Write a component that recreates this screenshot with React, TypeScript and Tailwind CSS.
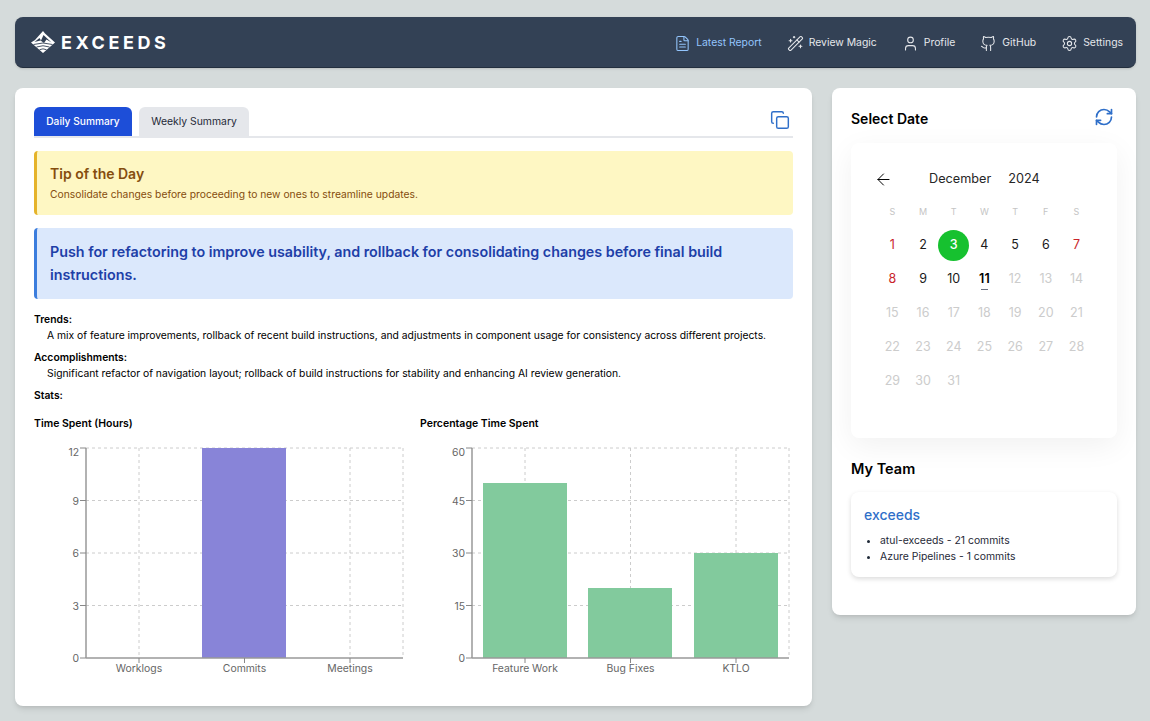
import { ArrowLeft, Copy, FileText, Github, RefreshCw, Settings, User, WandSparkles } from "lucide-react";

const navItems = [
  { label: "Latest Report", icon: FileText, active: true },
  { label: "Review Magic", icon: WandSparkles },
  { label: "Profile", icon: User },
  { label: "GitHub", icon: Github },
  { label: "Settings", icon: Settings },
];

const weekDays = ["S", "M", "T", "W", "T", "F", "S"];
const days = Array.from({ length: 31 }, (_, i) => i + 1);

const Logo = () => (
  <svg width="26" height="24" viewBox="0 0 26 24" fill="none">
    <path d="M13 1 L15 3.5 L25 12.5 L13 23 L1 12.5 L5 10 Z" fill="#fff" />
    <path d="M4.5 12 L9.5 8 L11 10.5 L13.5 5 L21.5 12.5 L16.5 9.5 L14 13 L10.5 10.5 Z" fill="#334155" />
    <path d="M3.5 14.5 Q13 11.5 22.5 14.5 M6.5 17 Q13 14.5 19.5 17 M9.5 19.7 Q13 18 16.5 19.7" stroke="#334155" strokeWidth="0.9" />
  </svg>
);

type Bar = { x: number; value: number };

const Chart = ({ title, ticks, max, labels, bars, color }: {
  title: string;
  ticks: number[];
  max: number;
  labels: { x: number; text: string }[];
  bars: Bar[];
  color: string;
}) => {
  const top = 10;
  const bottom = 220;
  const y = (v: number) => bottom - (v / max) * (bottom - top);
  return (
    <div>
      <h3 className="text-[10.5px] leading-4 font-semibold text-black mb-[6px]">{title}</h3>
      <svg width="376" height="250" className="block" fontSize="10.4" fill="#666">
        {ticks.slice(1).map((t) => (
          <line key={t} x1="52" x2="369" y1={y(t)} y2={y(t)} stroke="#ccc" strokeDasharray="3 3" />
        ))}
        {[105, 210.5, 316, 369].map((x) => (
          <line key={x} x1={x} x2={x} y1={top} y2={bottom} stroke="#ccc" strokeDasharray="3 3" />
        ))}
        {bars.map((b) => (
          <rect key={b.x} x={b.x} y={y(b.value)} width="84" height={bottom - y(b.value)} fill={color} />
        ))}
        <line x1="52" x2="52" y1={top} y2={bottom} stroke="#999" strokeWidth="1.5" />
        <line x1="52" x2="369" y1={bottom} y2={bottom} stroke="#999" strokeWidth="1.5" />
        {ticks.map((t) => (
          <g key={t}>
            <line x1="46" x2="52" y1={y(t)} y2={y(t)} stroke="#888" />
            <text x="45" y={t === max ? y(t) + 8 : y(t) + 4} textAnchor="end">{t}</text>
          </g>
        ))}
        {labels.map((l) => (
          <g key={l.text}>
            <line x1={l.x} x2={l.x} y1={bottom} y2={bottom + 5} stroke="#888" />
            <text x={l.x} y={bottom + 14} textAnchor="middle">{l.text}</text>
          </g>
        ))}
      </svg>
    </div>
  );
};

const DayCell = ({ day }: { day: number }) => {
  if (day === 3) {
    return <div className="w-[31px] h-[31px] rounded-full bg-[#16c12f] text-white font-medium flex items-center justify-center">3</div>;
  }
  if (day === 11) {
    return (
      <div className="relative font-semibold text-black">
        11
        <span className="absolute left-[2px] right-[2px] -bottom-[2px] h-px bg-gray-500" />
      </div>
    );
  }
  let color = "text-[#ccc]";
  if (day < 11) color = "text-[#1a1a1a]";
  if (day === 1 || day === 7 || day === 8) color = "text-[#c9252b]";
  return <div className={color}>{day}</div>;
};

export default function App() {
  return (
    <div className="h-[721px] overflow-hidden bg-[#d5dbdb] pt-[17px] pl-[15px] pr-[14px] font-['Inter',sans-serif]">
      {/* Header */}
      <header className="h-[51px] bg-[#334155] rounded-lg border-b border-[#232f3e] shadow-sm flex items-center justify-between pl-[15px] pr-[13px]">
        <div className="flex items-center gap-[5px]">
          <Logo />
          <span className="text-white text-[18px] font-bold tracking-[0.2em]">EXCEEDS</span>
        </div>
        <nav className="flex items-center gap-[25px] mt-[2px]">
          {navItems.map(({ label, icon: Icon, active }) => (
            <a key={label} className={`flex items-center gap-[5px] text-[10.4px] ${active ? "text-[#93c5fd]" : "text-[#e5e7eb]"}`}>
              <Icon size={17} strokeWidth={1.5} />
              {label}
            </a>
          ))}
        </nav>
      </header>

      <div className="flex items-start gap-[20px] mt-[20px]">
        {/* Report */}
        <main className="w-[797px] h-[618px] bg-white rounded-lg shadow-md pt-[19px] px-[19px]">
          <div className="h-[31px] flex items-end justify-between border-b-2 border-[#e5e7eb] relative">
            <div className="flex gap-[7px] h-[29px]">
              <button className="w-[98px] bg-[#1d4ed8] text-white text-[10.2px] font-medium rounded-t-md">Daily Summary</button>
              <button className="w-[110px] bg-[#e5e7eb] text-[#1f2937] text-[10.4px] rounded-t-md">Weekly Summary</button>
            </div>
            <Copy size={20} strokeWidth={1.75} className="absolute right-[3px] top-[3px] text-[#2f6fc9]" />
          </div>

          <div className="mt-[13px] h-[64px] bg-[#fef7c3] border-l-[3px] border-[#e5b32a] rounded pl-[13px] pt-[13px]">
            <h2 className="text-[14px] leading-5 font-semibold text-[#854d0e]">Tip of the Day</h2>
            <p className="mt-[2px] text-[10.3px] leading-4 text-[#854d0e]">Consolidate changes before proceeding to new ones to streamline updates.</p>
          </div>

          <div className="mt-[13px] h-[71px] bg-[#dbe8fc] border-l-[3px] border-[#3b7ddd] rounded pl-[13px] pr-[40px] pt-[13px]">
            <p className="text-[14.3px] leading-[22.5px] font-semibold text-[#1e3fa8]">
              Push for refactoring to improve usability, and rollback for consolidating changes before final build instructions.
            </p>
          </div>

          <div className="mt-[12px] text-[10.33px] leading-4 text-black">
            <div className="font-semibold">Trends:</div>
            <p className="pl-[13px]">A mix of feature improvements, rollback of recent build instructions, and adjustments in component usage for consistency across different projects.</p>
            <div className="font-semibold mt-[6px]">Accomplishments:</div>
            <p className="pl-[13px]">Significant refactor of navigation layout; rollback of build instructions for stability and enhancing AI review generation.</p>
            <div className="font-semibold mt-[6px]">Stats:</div>
          </div>

          <div className="grid grid-cols-[386px_373px] mt-[13px]">
            <Chart
              title="Time Spent (Hours)"
              ticks={[0, 3, 6, 9, 12]}
              max={12}
              color="#8884d8"
              bars={[{ x: 168, value: 12 }]}
              labels={[
                { x: 105, text: "Worklogs" },
                { x: 210.5, text: "Commits" },
                { x: 316, text: "Meetings" },
              ]}
            />
            <Chart
              title="Percentage Time Spent"
              ticks={[0, 15, 30, 45, 60]}
              max={60}
              color="#82ca9d"
              bars={[
                { x: 63, value: 50 },
                { x: 168, value: 20 },
                { x: 274, value: 30 },
              ]}
              labels={[
                { x: 105, text: "Feature Work" },
                { x: 210.5, text: "Bug Fixes" },
                { x: 316, text: "KTLO" },
              ]}
            />
          </div>
        </main>

        {/* Sidebar */}
        <aside className="w-[304px] h-[527px] bg-white rounded-lg shadow-md pt-[19px] px-[19px]">
          <div className="flex items-center justify-between h-[22px]">
            <h2 className="text-[14px] font-semibold text-black">Select Date</h2>
            <RefreshCw size={20} strokeWidth={2} className="text-[#2f6fc9] mr-[3px] -mt-[3px]" />
          </div>

          <div className="mt-[14px] h-[295px] rounded-lg bg-white shadow-[0_8px_30px_rgba(0,0,0,0.06)] pt-[25px] pl-[26px]">
            <div className="flex items-center h-[22px] text-[12.7px] text-[#262626]">
              <ArrowLeft size={19} strokeWidth={1.25} className="-ml-[3px] text-black" />
              <span className="ml-[36px]">December</span>
              <span className="ml-[17px]">2024</span>
            </div>
            <div className="grid grid-cols-[repeat(7,30.7px)] mt-[14px] text-center text-[9px] leading-4 text-[#c4c4c4]">
              {weekDays.map((d, i) => (
                <div key={i}>{d}</div>
              ))}
            </div>
            <div className="grid grid-cols-[repeat(7,30.7px)] auto-rows-[34px] mt-[8px] text-[12.5px] text-center">
              {days.map((d) => (
                <div key={d} className="flex items-center justify-center">
                  <DayCell day={d} />
                </div>
              ))}
            </div>
          </div>

          <h2 className="mt-[21px] text-[14.5px] leading-5 font-semibold text-black">My Team</h2>
          <div className="mt-[13px] h-[85px] rounded-lg bg-white shadow-[0_2px_5px_rgba(0,0,0,0.14)] pl-[13px] pt-[13px]">
            <h3 className="text-[14px] leading-5 font-medium text-[#2f6fc9]">exceeds</h3>
            <ul className="mt-[8px] text-[10.4px] leading-4 text-[#1f2937] list-disc pl-[16px]">
              <li>atul-exceeds - 21 commits</li>
              <li>Azure Pipelines - 1 commits</li>
            </ul>
          </div>
        </aside>
      </div>
    </div>
  );
}
